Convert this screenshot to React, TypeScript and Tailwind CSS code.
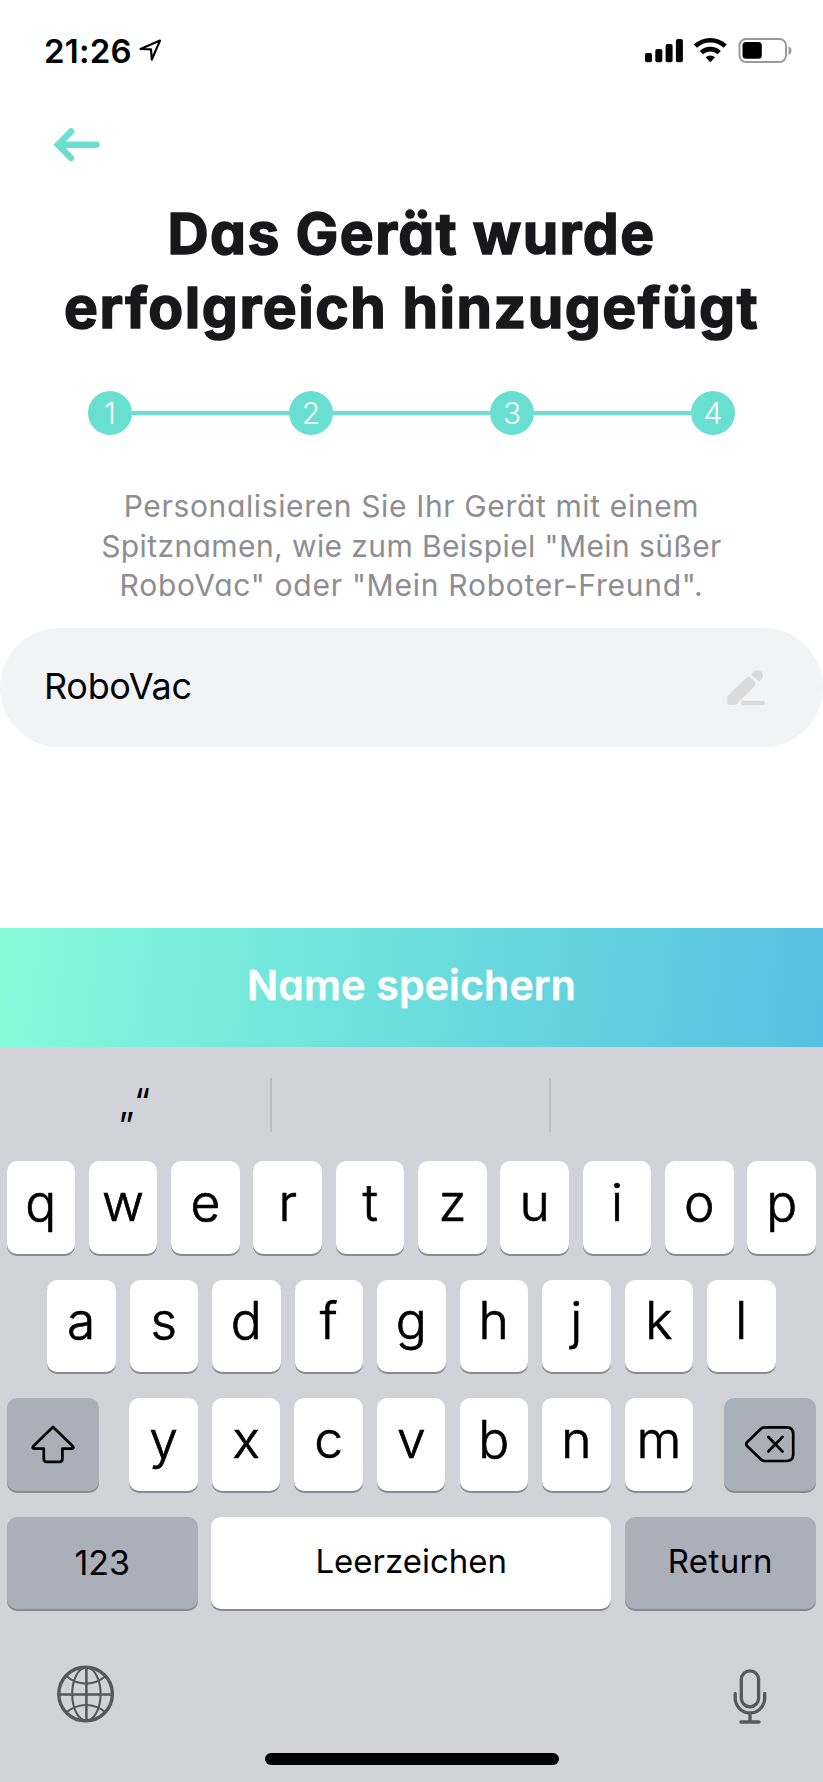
import React from 'react';
import cx from 'clsx';

const STEPS = ['1', '2', '3', '4'];
const TOP_ROW = ['q', 'w', 'e', 'r', 't', 'z', 'u', 'i', 'o', 'p'];
const HOME_ROW = ['a', 's', 'd', 'f', 'g', 'h', 'j', 'k', 'l'];
const BOTTOM_ROW = ['y', 'x', 'c', 'v', 'b', 'n', 'm'];

export default function App() {
  return (
    <div className="w-[823px] h-[1782px] flex flex-col bg-white overflow-hidden font-['Inter','Liberation_Sans',sans-serif] text-black">
      <StatusBar />
      <header className="h-[90px] pt-[26px] pl-[52px]">
        <button className="block" aria-label="Zurück">
          <BackArrow />
        </button>
      </header>
      <h1 className="h-[199px] pt-[5px] text-center text-[57px] leading-[74px] font-bold text-[#18181b] [font-feature-settings:'cv11'] [-webkit-text-stroke:1.5px_#18181b] whitespace-nowrap">
        <span className="block tracking-[1.4px]">Das Gerät wurde</span>
        <span className="block tracking-[1.55px]">erfolgreich hinzugefügt</span>
      </h1>
      <Steps />
      <p className="h-[193px] pt-[52px] text-center text-[30px] leading-[39.5px] text-[#8d8d92] [font-feature-settings:'cv11'] whitespace-nowrap">
        <span className="block tracking-[0.64px]">Personalisieren Sie Ihr Gerät mit einem</span>
        <span className="block tracking-[0.4px]">Spitznamen, wie zum Beispiel "Mein süßer</span>
        <span className="block tracking-[0.74px]">RoboVac" oder "Mein Roboter-Freund".</span>
      </p>
      <div className="h-[119px] flex items-center justify-between pl-[44px] pr-[56px] rounded-full bg-[#f2f3f5]">
        <span className="pb-[3px] text-[36px] leading-none tracking-[-0.3px]">RoboVac</span>
        <Pencil />
      </div>
      <button className="mt-auto h-[119px] pb-[3px] shrink-0 bg-[linear-gradient(97deg,#87fadb_0%,#6cdfdd_48%,#57bfe1_100%)] text-white text-[41px] font-semibold tracking-[0.2px] [font-feature-settings:'cv11'] [-webkit-text-stroke:0.5px_white]">
        Name speichern
      </button>
      <Keyboard />
    </div>
  );
}

const StatusBar: React.FC = () => (
  <div className="h-[102px] shrink-0 flex items-start justify-between pt-[34px] pl-[44px] pr-[30px]">
    <div className="flex items-start">
      <span className="text-[33px] leading-[34px] font-semibold tracking-[0.2px]">21:26</span>
      <svg className="ml-[5px] mt-[3px]" width="26" height="26" viewBox="0 0 26 26">
        <path
          d="M3.5 12 23 3.6 14.8 22.5 14 12.4Z"
          fill="none"
          stroke="#000"
          strokeWidth="2.2"
          strokeLinejoin="round"
        />
      </svg>
    </div>
    <svg className="mt-[2px]" width="148" height="28" viewBox="645 36 148 28">
      <rect x="645" y="53" width="7" height="9.3" rx="2" />
      <rect x="655.3" y="49" width="7" height="13.3" rx="2" />
      <rect x="665.6" y="44" width="7" height="18.3" rx="2" />
      <rect x="675.9" y="39" width="7" height="23.3" rx="2" />
      <g fill="none" stroke="#000" strokeWidth="4.6">
        <path d="M695.4 46.2a21.5 21.5 0 0 1 29.8 0" />
        <path d="M701.4 52.6a13 13 0 0 1 17.8 0" />
      </g>
      <path d="M705.6 57.2a7 7 0 0 1 9.4 0L710.3 62.3Z" />
      <rect x="739.5" y="39" width="46.5" height="23" rx="6.5" fill="#fff" stroke="#999" strokeWidth="2" />
      <rect x="742.5" y="42" width="19.3" height="16.8" rx="3.5" />
      <path d="M788.5 46.2c4 1.6 4 7.2 0 8.8Z" fill="#999" />
    </svg>
  </div>
);

const BackArrow: React.FC = () => (
  <svg width="50" height="34" viewBox="52 128 50 34">
    <path
      d="M71 131.5 58 144.7 71 158M60 144.7H96.5"
      fill="none"
      stroke="#68dfd0"
      strokeWidth="6.4"
      strokeLinecap="round"
    />
  </svg>
);

const Steps: React.FC = () => (
  <ol className="h-[44px] mx-[88px] shrink-0 flex items-center">
    {STEPS.map((step, index) => (
      <li key={step} className={cx('flex items-center', index > 0 && 'flex-1')}>
        {index > 0 && <span className="flex-1 h-[4.5px] bg-[#68dfd0]" />}
        <span className="w-[44px] h-[44px] flex items-center justify-center rounded-full bg-[#68dfd0] text-white text-[30px] leading-none font-light">
          {step}
        </span>
      </li>
    ))}
  </ol>
);

const Pencil: React.FC = () => (
  <svg width="40" height="38" viewBox="727 669 40 38" fill="#dadada">
    <path d="M727.3 696.5 746.5 677.6Q748.8 675.9 750.8 677.8L754.8 681.7Q756.6 683.6 754.8 685.8L736.3 704.2Q735.2 705 733.5 705H730Q727.3 705 727.3 702.2Z" />
    <path d="M751.2 674.7C752.6 670.8 757.5 668.6 761 671.5 764.5 675 762.8 680 758.8 681.2Z" />
    <rect x="741" y="700.8" width="24" height="4.4" rx="2.2" />
  </svg>
);

const Keyboard: React.FC = () => (
  <div className="h-[735px] shrink-0 flex flex-col bg-[#d1d3d9]">
    <div className="h-[114px] flex pt-[31px]">
      <div className="w-[269px] mr-px h-[54px] flex justify-center text-[36px] leading-[54px]">
        <span className="-mt-[2px]">„</span>
        <span className="-mt-[4px]">“</span>
      </div>
      <div className="w-[281px] h-[54px] border-x-2 border-[#bbbdc2]" />
    </div>
    <div className="pl-[6.5px] pr-[7px] flex flex-col gap-[26px]">
      <div className="flex justify-between">
        {TOP_ROW.map(letter => (
          <LetterKey key={letter}>{letter}</LetterKey>
        ))}
      </div>
      <div className="flex justify-between px-[40.5px]">
        {HOME_ROW.map(letter => (
          <LetterKey key={letter}>{letter}</LetterKey>
        ))}
      </div>
      <div className="flex justify-between">
        <Key className="w-[92px] bg-[#abafba]">
          <ShiftIcon />
        </Key>
        <div className="w-[564px] flex justify-between">
          {BOTTOM_ROW.map(letter => (
            <LetterKey key={letter}>{letter}</LetterKey>
          ))}
        </div>
        <Key className="w-[92px] bg-[#abafba]">
          <BackspaceIcon />
        </Key>
      </div>
      <div className="flex justify-between">
        <Key className="w-[191.5px] bg-[#abafba] text-[34px] pt-px">123</Key>
        <Key className="w-[400px] bg-white text-[33px] pb-[3px]">Leerzeichen</Key>
        <Key className="w-[191.5px] bg-[#abafba] text-[33px] tracking-[0.4px] pb-[3px]">Return</Key>
      </div>
    </div>
    <div className="flex justify-between mt-[55px] pl-[56px] pr-[55px]">
      <GlobeIcon />
      <MicIcon />
    </div>
    <div className="w-[294px] h-[12px] mt-auto mb-[17px] mx-auto rounded-full bg-black" />
  </div>
);

interface KeyProps {
  className?: string;
  children: React.ReactNode;
}

const Key: React.FC<KeyProps> = ({ className, children }) => (
  <button
    className={cx(
      className,
      'h-[92.5px] shrink-0 flex items-center justify-center rounded-[10px] leading-none shadow-[0_2px_0_#898a8e]',
    )}
  >
    {children}
  </button>
);

const LetterKey: React.FC<KeyProps> = ({ children }) => (
  <Key className="w-[68.5px] bg-white text-[51.5px] font-light [-webkit-text-stroke:0.7px_black] pb-[10px]">
    {children}
  </Key>
);

const ShiftIcon: React.FC = () => (
  <svg width="46" height="42" viewBox="30 1423 46 42">
    <path
      d="M53 1427 33 1446.5Q32 1448.5 34 1448.6H43.8V1459Q43.8 1461.8 46.6 1461.8H59.6Q62.4 1461.8 62.4 1459V1448.6H72Q74.2 1448.5 73 1446.5Z"
      fill="none"
      stroke="#000"
      strokeWidth="2.7"
      strokeLinejoin="round"
    />
  </svg>
);

const BackspaceIcon: React.FC = () => (
  <svg width="52" height="40" viewBox="744.5 1424 52 40">
    <g fill="none" stroke="#000" strokeWidth="2.7" strokeLinecap="round" strokeLinejoin="round">
      <path d="M765 1427.3H787Q793.7 1427.3 793.7 1434V1454.5Q793.7 1461 787 1461H765Q763 1461 761.5 1459.5L747.5 1446Q746 1444.2 747.5 1442.3L761.5 1428.8Q763 1427.3 765 1427.3Z" />
      <path d="M768.8 1437 783 1451.5M783 1437 768.8 1451.5" />
    </g>
  </svg>
);

const GlobeIcon: React.FC = () => (
  <svg width="60" height="60" viewBox="56 1665 60 60" fill="none" stroke="#55585d">
    <circle cx="85.6" cy="1695" r="26.8" strokeWidth="3.4" />
    <g strokeWidth="2.1">
      <path d="M59 1695.5H112M86.4 1668V1722" strokeWidth="2.6" />
      <ellipse cx="86.4" cy="1695" rx="14.2" ry="26.5" />
      <path d="M66.5 1677.3C78 1687 94 1687 105.5 1677.3M66.5 1713.2C78 1703.5 94 1703.5 105.5 1713.2" />
    </g>
  </svg>
);

const MicIcon: React.FC = () => (
  <svg className="mt-[3px]" width="36" height="60" viewBox="731.5 1668 36 60" fill="none" stroke="#55585d">
    <g strokeWidth="3.3" strokeLinecap="round">
      <rect x="740.8" y="1671.8" width="17.3" height="36" rx="8.65" />
      <path d="M734.7 1694.5V1699A14.7 14.9 0 0 0 764.2 1699V1694.5M749.5 1714V1722M740.5 1723H758.5" />
    </g>
  </svg>
);
